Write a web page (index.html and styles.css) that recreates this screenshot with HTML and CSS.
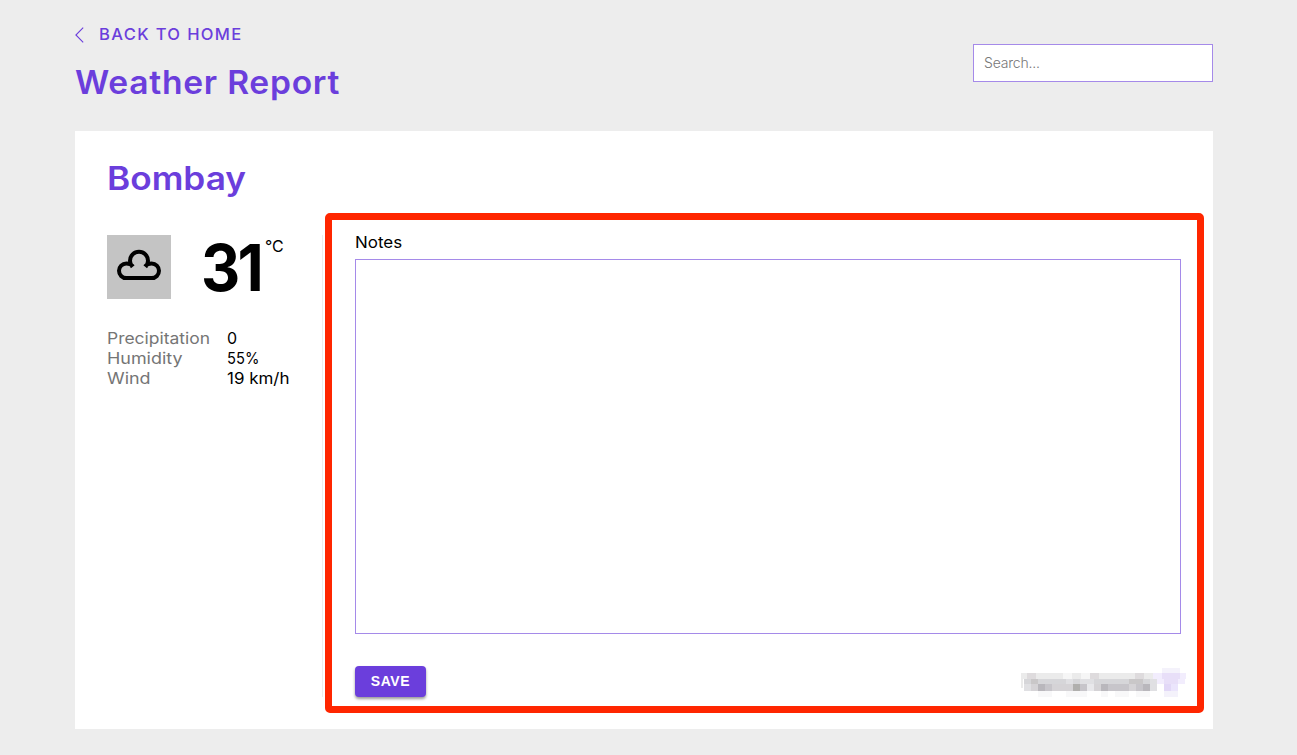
FILE: index.html
```html
<!DOCTYPE html>
<html lang="en">
<head>
<meta charset="utf-8">
<title>Weather Report</title>
<link rel="stylesheet" href="styles.css">
</head>
<body>
<div class="page">
  <header class="header">
    <div>
      <a class="back"><svg class="chevron" width="10" height="16" viewBox="0 0 10 16"><path d="M8.2.6.9 8l7.3 7.4" fill="none" stroke="currentColor" stroke-width="1.1"/></svg><span class="back-label">BACK TO HOME</span></a>
      <h1 class="title"><span class="title-text">Weather Report</span></h1>
    </div>
    <input class="search" type="text" placeholder="Search...">
  </header>
  <main class="card">
    <h2 class="city"><span class="city-text">Bombay</span></h2>
    <div class="columns">
      <section class="weather">
        <div class="current">
          <div class="icon"><svg width="64" height="64" viewBox="0 0 64 64"><path d="M26 31.500C24.500 29.500 22 28.500 19.300 28.500A7.300 7.300 0 0 0 19.300 43.100H44.700A7.300 7.300 0 0 0 44.700 28.500C42 28.500 39.500 29.500 38 31.500M25.500 32C23.800 30 23 28 23 25.700A9 9 0 0 1 41 25.700C41 28 40.200 30 38.500 32" fill="none" stroke="#000" stroke-width="4"/></svg></div>
          <span class="degrees"><span class="degrees-text">31</span></span><span class="unit">°C</span>
        </div>
        <dl class="details">
          <dt><span class="wide">Precipitation</span></dt><dd>0</dd>
          <dt><span class="wider">Humidity</span></dt><dd><span class="narrow">55%</span></dd>
          <dt><span class="wider">Wind</span></dt><dd><span class="semi-wide">19 km/h</span></dd>
        </dl>
      </section>
      <section class="notes">
        <label class="notes-label" for="notes"><span class="semi-wide">Notes</span></label>
        <textarea class="field" id="notes"></textarea>
        <div class="actions">
          <button class="save">SAVE</button>
          <svg class="redacted" width="168" height="32" viewBox="1018 666 168 32" shape-rendering="crispEdges">
            <path fill="#ebebeb" d="M1021 673h132v6h-132zM1021 679h2v9h-2z"/>
            <path fill="#dedbdd" d="M1027 673h9v6h-9zM1090 673h9v6h-9zM1135 673h9v6h-9z"/>
            <path fill="#f6f6f6" d="M1063 673h9v6h-9zM1081 673h9v6h-9z"/>
            <path fill="#d6d6d9" d="M1024 679h126v5h-126z"/>
            <path fill="#c9c7c8" d="M1031 679h7v5h-7zM1129 679h14v5h-14z"/>
            <path fill="#e0e0e3" d="M1066 679h7v5h-7zM1080 679h14v5h-14zM1150 679h7v12h-7zM1024 684h7v7h-7z"/>
            <path fill="#d5d3d6" d="M1031 684h7v7h-7zM1052 684h21v7h-21zM1094 684h7v7h-7zM1129 684h7v7h-7z"/>
            <path fill="#b9b7bc" d="M1038 684h7v7h-7zM1101 684h7v7h-7zM1143 684h7v7h-7z"/>
            <path fill="#c7c5ca" d="M1045 684h7v7h-7zM1080 684h7v7h-7zM1108 684h21v7h-21zM1136 684h7v7h-7z"/>
            <path fill="#b0afad" d="M1073 684h7v7h-7z"/>
            <path fill="#e8e8eb" d="M1087 684h7v7h-7z"/>
            <path fill="#f8f8f9" d="M1038 691h14v6h-14zM1066 691h21v6h-21zM1101 691h7v6h-7zM1115 691h14v6h-14zM1136 691h14v6h-14z"/>
            <path fill="#f4f2fb" d="M1162 668h18v5h-18zM1164 691h14v6h-14z"/>
            <path fill="#f2edfd" d="M1153 673h33v6h-33zM1157 679h28v5h-28z"/>
            <path fill="#e8dff8" d="M1162 673h18v6h-18zM1164 679h14v5h-14z"/>
            <path fill="#e2d8f7" d="M1164 684h7v7h-7z"/>
            <path fill="#ebe5fc" d="M1171 684h7v7h-7z"/>
          </svg>
        </div>
      </section>
    </div>
  </main>
</div>
</body>
</html>
```
FILE: styles.css
```css
* { box-sizing: border-box; }
body { margin: 0; background: #ededed; color: #000; font: 16px/20px Inter, sans-serif; }
.page { width: 1138px; margin-left: 75px; padding-top: 24px; }
.header { display: flex; justify-content: space-between; height: 107px; }
.back { display: flex; align-items: center; height: 20px; color: #6b3edc; font-weight: 500; letter-spacing: 1.3px; }
.chevron { margin-right: 14px; margin-top: 2px; }
.back-label, .title-text, .city-text, .degrees-text, .wide, .wider, .semi-wide, .narrow { display: inline-block; transform-origin: left; }
.back-label { transform: scaleX(1.035); }
.title-text { transform: scaleX(1.05); }
.city-text { transform: scaleX(1.1); }
.degrees-text { transform: scaleX(.95); }
.wide { transform: scaleX(1.09); }
.wider { transform: scaleX(1.12); }
.semi-wide { transform: scaleX(1.06); }
.narrow { transform: scaleX(.92); }
.title, .city { margin: 0; color: #6b3edc; font-size: 32px; line-height: 40px; font-weight: 600; white-space: nowrap; }
.title { margin-top: 19px; letter-spacing: .7px; }
.search { width: 240px; height: 38px; margin-top: 20px; padding: 0 10px 2px; border: 1px solid #a58ae9; font: 300 14px Inter, sans-serif; letter-spacing: -.2px; color: #666; }
.search::placeholder { color: #777; opacity: 1; }
.card { height: 598px; background: #fff; padding: 28px 9px 0 32px; }
.columns { display: flex; }
.weather { width: 216px; height: 462px; margin: 36px 2px 0 0; border-right: 1px solid #ededed; }
.current { display: flex; height: 64px; }
.icon { width: 64px; height: 64px; background: #c4c4c4; margin-right: 30px; }
.degrees { width: 64px; font-size: 64px; line-height: 65px; font-weight: 700; letter-spacing: -3px; }
.unit { line-height: 22px; }
.details { display: grid; grid-template-columns: 120px 1fr; grid-auto-rows: 20px; margin: 29px 0 0; white-space: nowrap; }
.details dt { color: #757575; }
.details dd { margin: 0; }
.notes { display: flex; flex-direction: column; width: 879px; height: 500px; margin-top: 14px; padding: 13px 16px 0 23px; border: 7px solid #ff2600; border-radius: 5px; }
.notes-label { height: 26px; line-height: 18px; }
.field { width: 826px; height: 375px; resize: none; border: 1px solid #a58ae9; background: #fff; }
.actions { display: flex; justify-content: space-between; padding-top: 32px; }
.save { width: 71px; height: 31px; padding: 0 0 1px; border: 0; border-radius: 4px; background: #6b3edc; color: #fff; font: 700 14px "Liberation Sans", sans-serif; letter-spacing: .6px; box-shadow: 0 2px 3px #0006; }
.redacted { margin-right: -5px; }
```
